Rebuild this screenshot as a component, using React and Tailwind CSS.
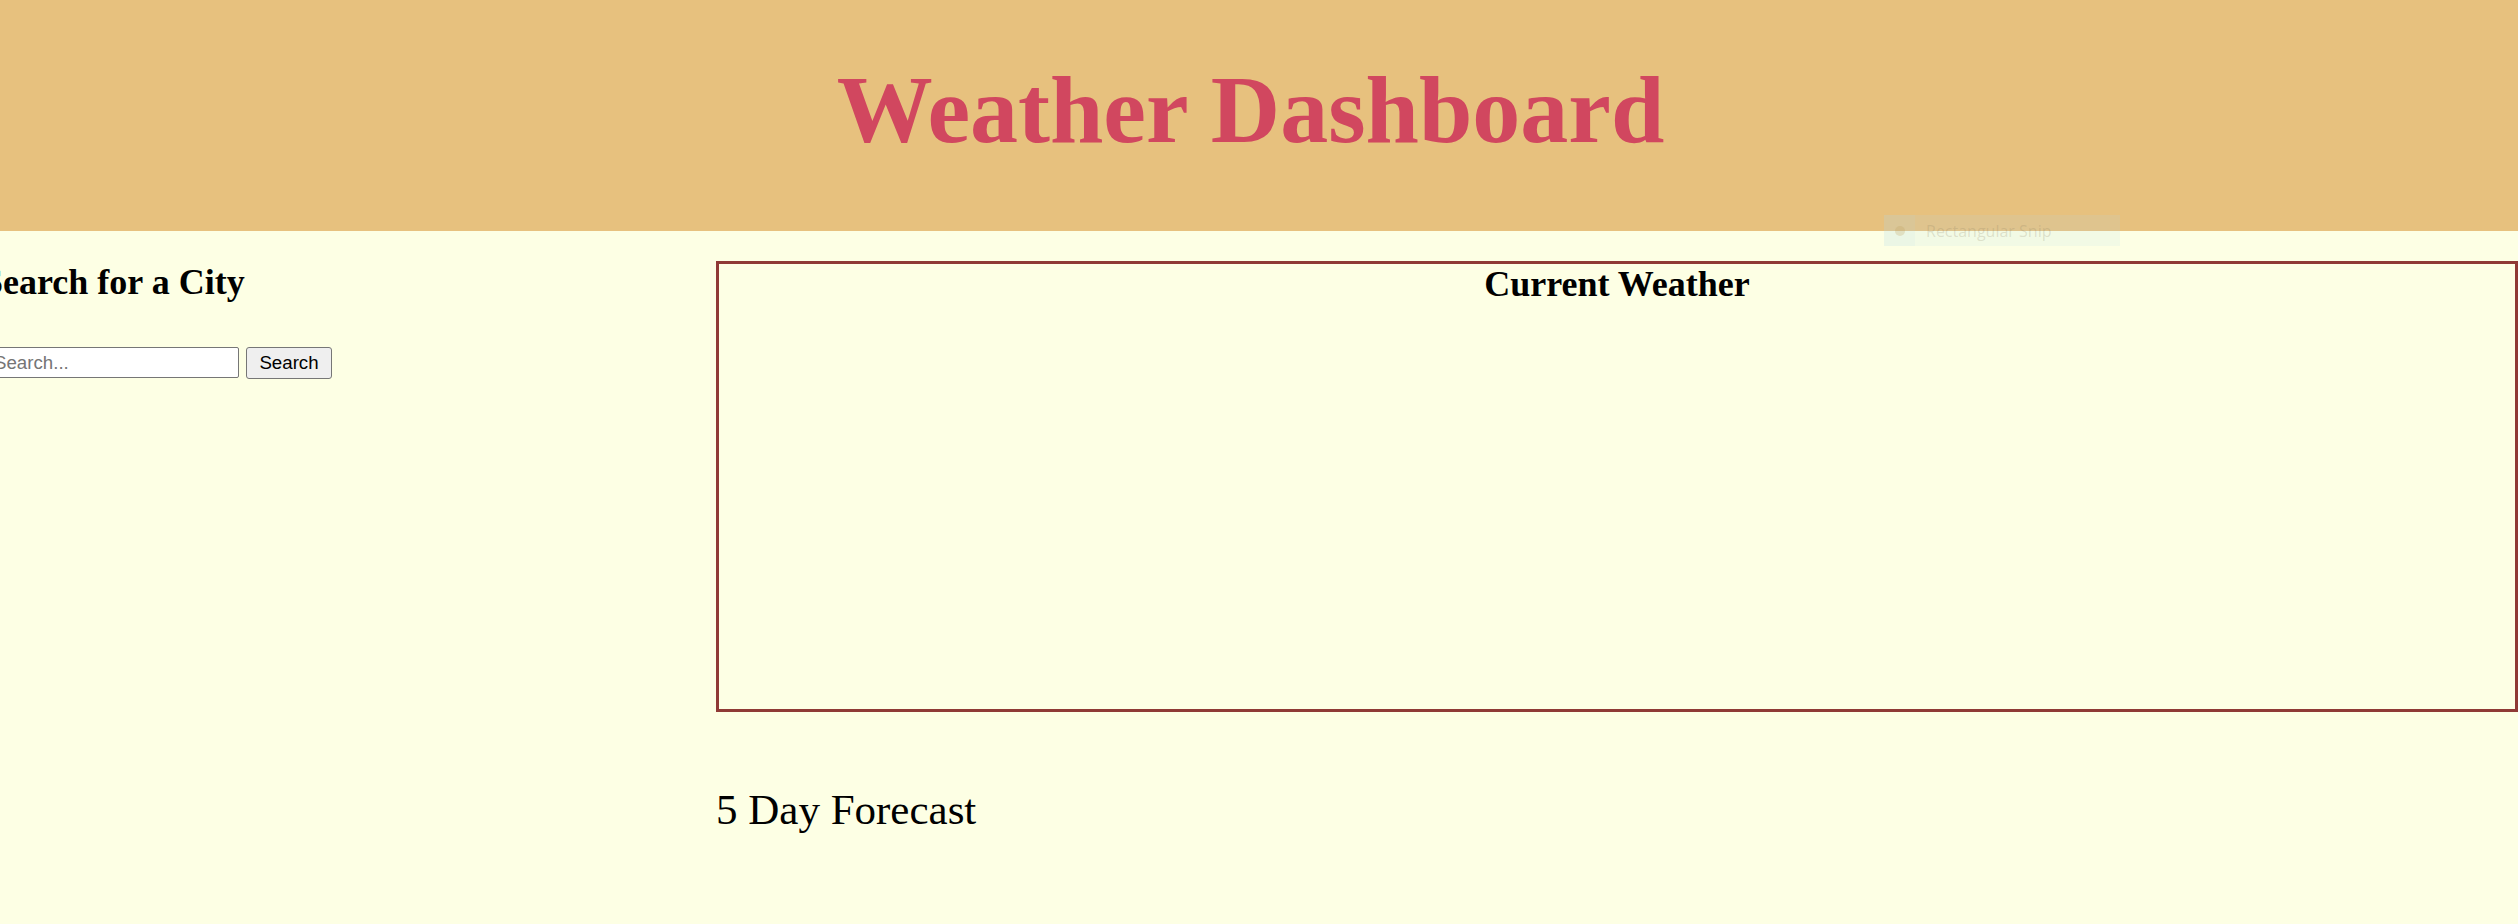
export default function App() {
  return (
    <div className="relative h-[924px] overflow-hidden bg-[#FDFFE4] font-['Liberation_Serif','Times_New_Roman',serif] text-black">
      <div className="ml-[-17px] w-[2535px]">
        <header className="h-[231px] bg-[#E7C17E] pt-[62px] text-center">
          <h1 className="text-[96px] font-bold leading-none text-[#D1475F]">Weather Dashboard</h1>
        </header>
        <div className="flex">
          <aside className="w-[733px] shrink-0 pt-[33px]">
            <h2 className="text-[36px] font-bold leading-none">Search for a City</h2>
            <form className="mt-[47px] flex gap-[7px]" onSubmit={(e) => e.preventDefault()}>
              <input
                type="text"
                placeholder="Search..."
                className="h-[31px] w-[256px] rounded-[2px] border-[1.5px] border-[#767676] bg-white pl-[10px] pr-[3px] font-['Liberation_Sans',Arial,sans-serif] text-[18.7px] text-black placeholder:text-[#757575] outline-none"
              />
              <button
                type="submit"
                className="h-[32px] w-[86px] rounded-[3px] border-[1.5px] border-[#767676] bg-[#EFEFEF] font-['Liberation_Sans',Arial,sans-serif] text-[18.7px] leading-none text-black"
              >
                Search
              </button>
            </form>
          </aside>
          <main className="flex-1 pt-[30px]">
            <section className="h-[451px] border-[3px] border-[#8F3A35] pt-[2px] text-center">
              <h2 className="text-[36px] font-bold leading-none">Current Weather</h2>
            </section>
            <h2 className="mt-[76px] text-[43px] font-normal leading-none">5 Day Forecast</h2>
          </main>
        </div>
      </div>
      <div className="absolute left-[1884px] top-[215px] flex h-[31px] w-[236px] items-center bg-[rgba(176,217,238,0.14)]">
        <div className="flex h-full w-[31px] items-center justify-center bg-[rgba(176,217,238,0.1)]">
          <div className="h-[10px] w-[10px] rounded-full bg-[rgba(190,160,90,0.25)]" />
        </div>
        <span className="ml-[11px] font-['Open_Sans',sans-serif] text-[16px] leading-none text-[rgba(130,120,90,0.2)]">Rectangular Snip</span>
      </div>
    </div>
  );
}
